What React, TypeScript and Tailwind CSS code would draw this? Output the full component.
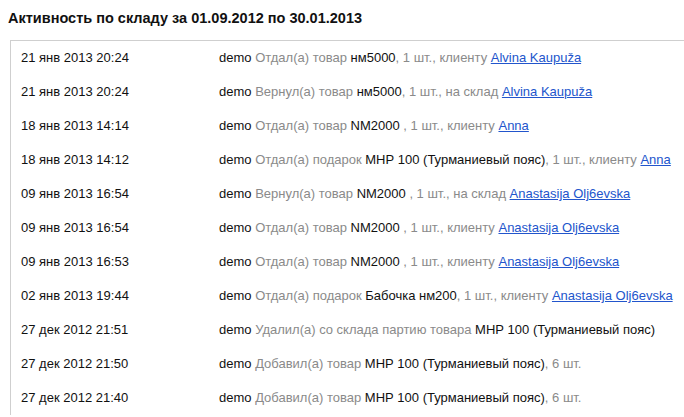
import React from "react";

type Part = { t: string; k: "u" | "g" | "b" | "l" };
type Row = { date: string; parts: Part[] };

const u = (t: string): Part => ({ t, k: "u" });
const g = (t: string): Part => ({ t, k: "g" });
const b = (t: string): Part => ({ t, k: "b" });
const l = (t: string): Part => ({ t, k: "l" });

const rows: Row[] = [
  { date: "21 янв 2013 20:24", parts: [u("demo"), g(" Отдал(а) товар "), b("нм5000"), g(", 1 шт., клиенту "), l("Alvina Kaupuža")] },
  { date: "21 янв 2013 20:24", parts: [u("demo"), g(" Вернул(а) товар "), b("нм5000"), g(", 1 шт., на склад "), l("Alvina Kaupuža")] },
  { date: "18 янв 2013 14:14", parts: [u("demo"), g(" Отдал(а) товар "), b("NM2000 "), g(", 1 шт., клиенту "), l("Anna")] },
  { date: "18 янв 2013 14:12", parts: [u("demo"), g(" Отдал(а) подарок "), b("МНР 100 (Турманиевый пояс)"), g(", 1 шт., клиенту "), l("Anna")] },
  { date: "09 янв 2013 16:54", parts: [u("demo"), g(" Вернул(а) товар "), b("NM2000 "), g(", 1 шт., на склад "), l("Anastasija Olj6evska")] },
  { date: "09 янв 2013 16:54", parts: [u("demo"), g(" Отдал(а) товар "), b("NM2000 "), g(", 1 шт., клиенту "), l("Anastasija Olj6evska")] },
  { date: "09 янв 2013 16:53", parts: [u("demo"), g(" Отдал(а) товар "), b("NM2000 "), g(", 1 шт., клиенту "), l("Anastasija Olj6evska")] },
  { date: "02 янв 2013 19:44", parts: [u("demo"), g(" Отдал(а) подарок "), b("Бабочка нм200"), g(", 1 шт., клиенту "), l("Anastasija Olj6evska")] },
  { date: "27 дек 2012 21:51", parts: [u("demo"), g(" Удалил(а) со склада партию товара "), b("МНР 100 (Турманиевый пояс)")] },
  { date: "27 дек 2012 21:50", parts: [u("demo"), g(" Добавил(а) товар "), b("МНР 100 (Турманиевый пояс)"), g(", 6 шт.")] },
  { date: "27 дек 2012 21:40", parts: [u("demo"), g(" Добавил(а) товар "), b("МНР 100 (Турманиевый пояс)"), g(", 6 шт.")] },
];

function PartView({ p }: { p: Part }) {
  if (p.k === "l")
    return <a href="#" className="text-[#2255cc] underline">{p.t}</a>;
  if (p.k === "g") return <span className="text-[#8a8a8a]">{p.t}</span>;
  return <span className="text-[#111]">{p.t}</span>;
}

export default function App() {
  return (
    <div
      className="w-[684px] h-[417px] overflow-hidden bg-white"
      style={{ fontFamily: '"Liberation Sans", Arial, sans-serif' }}
    >
      <h1 className="pl-[8px] pt-[8px] h-[40px] text-[14.5px] leading-[20px] font-bold text-[#111]">
        Активность по складу за 01.09.2012 по 30.01.2013
      </h1>
      <div className="ml-[10px] w-[690px] border-l border-t border-[#cfcfcf]">
        {rows.map((r, i) => (
          <div key={i} className="flex h-[34px] items-center text-[13px] whitespace-nowrap">
            <div className="w-[208px] pl-[10px] text-[#111]">{r.date}</div>
            <div>
              {r.parts.map((p, j) => (
                <PartView key={j} p={p} />
              ))}
            </div>
          </div>
        ))}
      </div>
    </div>
  );
}
